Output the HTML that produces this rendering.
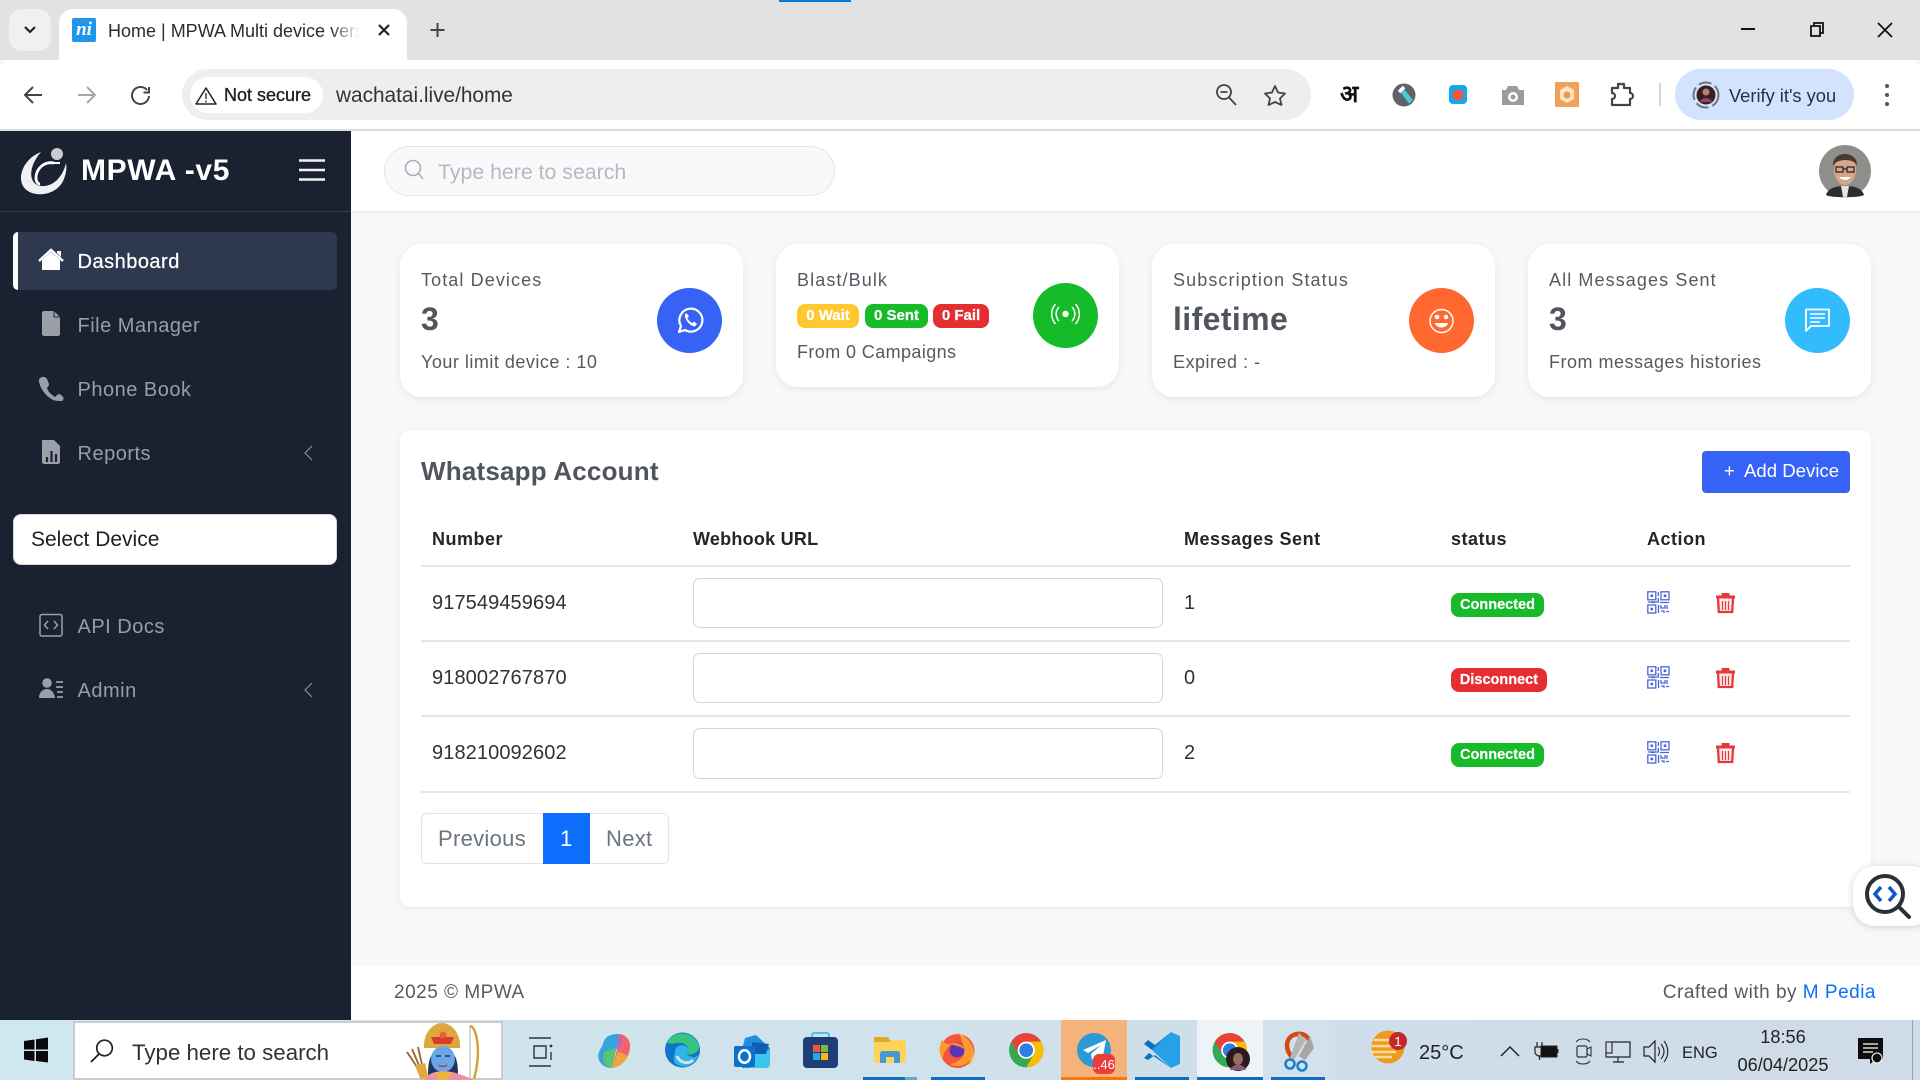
<!DOCTYPE html>
<html lang="en">
<head>
<meta charset="utf-8">
<title>Home | MPWA Multi device version</title>
<style>
html,body{margin:0;padding:0;width:1920px;height:1080px;overflow:hidden;background:#f6f8fa;font-family:"Liberation Sans","Noto Sans CJK SC",sans-serif}
.b{position:absolute;box-sizing:border-box}
.t{position:absolute;white-space:nowrap;line-height:30px;height:30px;margin-top:1px}
svg{position:absolute;left:0;top:0;overflow:visible}
.nav{font-size:20px;letter-spacing:.5px;color:#989da6}
.lab{font-size:18px;letter-spacing:1.1px;color:#555a62;margin-top:.5px}
.val{font-size:32px;color:#50555d;font-weight:bold;letter-spacing:.4px;margin-top:0}
.sub{font-size:18px;letter-spacing:.5px;color:#555a62;margin-top:0}
.card{background:#fff;border-radius:22px;box-shadow:0 2px 7px rgba(60,70,90,.09)}
.th{font-size:18px;font-weight:bold;color:#22252a;letter-spacing:.5px;margin-top:-1px}
.td{font-size:20px;color:#2f3236;letter-spacing:.1px}
.inp{background:#fff;border:1.5px solid #d2d4d6;border-radius:7px;left:693px;width:470px}
.pill{border-radius:8px;color:#fff;font-weight:bold;text-align:center;padding-top:1px;-webkit-text-stroke:.2px #fff}
.line{background:#e3e5e8;left:421px;width:1429px;height:2px}
</style>
</head>
<body>
<!-- browser chrome -->
<div class="b" style="left:0;top:0;width:1920px;height:60px;background:#e2e2e2"></div>
<div class="b" style="left:779px;top:0;width:72px;height:2px;background:#0a78d2"></div>
<div class="b" style="left:9px;top:9px;width:42px;height:42px;border-radius:13px;background:#f0f0f0"></div>
<div class="b" style="left:59px;top:9px;width:348px;height:52px;background:#fff;border-radius:14px 14px 0 0"></div>
<div class="b" style="left:72px;top:18px;width:24px;height:24px;background:#2196e8;border-radius:2px;color:#fff;font:italic bold 19px/24px 'Liberation Serif',serif;text-align:center;overflow:hidden">ni</div>
<div class="t" style="left:108px;top:15px;width:252px;overflow:hidden;font-size:18px;color:#2c2c2c;-webkit-mask-image:linear-gradient(90deg,#000 88%,transparent 100%);mask-image:linear-gradient(90deg,#000 88%,transparent 100%)">Home | MPWA Multi device version</div>
<div class="b" style="left:0;top:60px;width:1920px;height:69px;background:#fff;border-radius:10px 10px 0 0"></div>
<div class="b" style="left:0;top:129px;width:1920px;height:2px;background:#dedede"></div>
<div class="b" style="left:182px;top:69px;width:1129px;height:51px;border-radius:26px;background:#efedee"></div>
<div class="b" style="left:190px;top:77px;width:133px;height:36px;border-radius:18px;background:#fff"></div>
<div class="t" style="left:224px;top:79px;font-size:18px;font-weight:500;color:#222;-webkit-text-stroke:.35px #222">Not secure</div>
<div class="t" style="left:336px;top:79.500px;font-size:20.8px;color:#333">wachatai.live/home</div>
<div class="b" style="left:1675px;top:69px;width:179px;height:51px;border-radius:26px;background:#d3e3fd"></div>
<div class="t" style="left:1729px;top:80px;font-size:18.3px;color:#1f2f4d">Verify it's you</div>
<div class="t" style="left:1340px;top:79px;font-size:24px;font-weight:bold;color:#111;font-family:'Liberation Sans','DejaVu Sans',sans-serif">अ</div>

<!-- sidebar -->
<div class="b" style="left:0;top:131px;width:351px;height:889px;background:#1a2232"></div>
<div class="b" style="left:0;top:211px;width:351px;height:1px;background:#333c4d"></div>
<div class="t" style="left:81px;top:155px;font-size:30px;font-weight:bold;color:#fff;letter-spacing:.65px">MPWA -v5</div>
<div class="b" style="left:13px;top:232px;width:324px;height:58px;background:#2e394f;border-radius:5px;border-left:5px solid #fff"></div>
<div class="t nav" style="left:77.500px;top:246px;color:#fff;font-weight:500;-webkit-text-stroke:.25px #fff">Dashboard</div>
<div class="t nav" style="left:77.500px;top:310px">File Manager</div>
<div class="t nav" style="left:77.500px;top:374px">Phone Book</div>
<div class="t nav" style="left:77.500px;top:438px">Reports</div>
<div class="b" style="left:13px;top:514px;width:324px;height:51px;background:#fff;border-radius:8px;border:1px solid #d5d7da"></div>
<div class="t" style="left:31px;top:524px;font-size:21px;color:#1d1f22">Select Device</div>
<div class="t nav" style="left:77.500px;top:611px">API Docs</div>
<div class="t nav" style="left:77.500px;top:675px">Admin</div>

<!-- header -->
<div class="b" style="left:351px;top:131px;width:1569px;height:80px;background:#fff;box-shadow:0 2px 5px rgba(60,70,90,.08)"></div>
<div class="b" style="left:383.500px;top:146px;width:451px;height:50px;border-radius:25px;background:#f8f9fa;border:1.5px solid #e4e5e7"></div>
<div class="t" style="left:438px;top:156px;font-size:21.3px;color:#b6b9be">Type here to search</div>

<!-- stat cards -->
<div class="b card" style="left:400px;top:244px;width:343px;height:153px"></div>
<div class="b card" style="left:776px;top:244px;width:343px;height:143px"></div>
<div class="b card" style="left:1152px;top:244px;width:343px;height:153px"></div>
<div class="b card" style="left:1528px;top:244px;width:343px;height:153px"></div>

<div class="t lab" style="left:421px;top:264px">Total Devices</div>
<div class="t val" style="left:421px;top:304px">3</div>
<div class="t sub" style="left:421px;top:347px">Your limit device : 10</div>

<div class="t lab" style="left:797px;top:264px">Blast/Bulk</div>
<div class="b pill" style="left:797px;top:304px;width:62px;height:24px;background:#ffc82f;font-size:15px;line-height:22px">0 Wait</div>
<div class="b pill" style="left:865px;top:304px;width:63px;height:24px;background:#16bb2a;font-size:15px;line-height:22px">0 Sent</div>
<div class="b pill" style="left:933px;top:304px;width:56px;height:24px;background:#e52e31;font-size:15px;line-height:22px">0 Fail</div>
<div class="t sub" style="left:797px;top:337px;letter-spacing:.4px">From 0 Campaigns</div>

<div class="t lab" style="left:1173px;top:264px">Subscription Status</div>
<div class="t val" style="left:1173px;top:304px">lifetime</div>
<div class="t sub" style="left:1173px;top:347px">Expired : -</div>

<div class="t lab" style="left:1549px;top:264px">All Messages Sent</div>
<div class="t val" style="left:1549px;top:304px">3</div>
<div class="t sub" style="left:1549px;top:347px">From messages histories</div>

<!-- main card -->
<div class="b" style="left:400px;top:430px;width:1471px;height:477px;background:#fff;border-radius:10px;box-shadow:0 2px 7px rgba(60,70,90,.07)"></div>
<div class="t" style="left:421px;top:456px;margin-top:0;font-size:26px;font-weight:bold;color:#50555c;letter-spacing:.2px">Whatsapp Account</div>
<div class="b" style="left:1702px;top:451px;width:148px;height:42px;background:#3662f5;border-radius:4px"></div>
<div class="t" style="left:1724px;top:456px;margin-top:0;font-size:18.5px;color:#fff">+</div>
<div class="t" style="left:1744px;top:456px;margin-top:0;font-size:18.6px;color:#fff">Add Device</div>

<div class="t th" style="left:432px;top:525px">Number</div>
<div class="t th" style="left:693px;top:525px;letter-spacing:.25px">Webhook URL</div>
<div class="t th" style="left:1184px;top:525px">Messages Sent</div>
<div class="t th" style="left:1451px;top:525px">status</div>
<div class="t th" style="left:1647px;top:525px">Action</div>

<div class="b line" style="top:564.500px"></div>
<div class="b line" style="top:640px"></div>
<div class="b line" style="top:715px"></div>
<div class="b line" style="top:790.500px"></div>

<div class="t td" style="left:432px;top:587px">917549459694</div>
<div class="t td" style="left:432px;top:662px">918002767870</div>
<div class="t td" style="left:432px;top:737px">918210092602</div>
<div class="b inp" style="top:578px;height:50px"></div>
<div class="b inp" style="top:653px;height:50px"></div>
<div class="b inp" style="top:728px;height:51px"></div>
<div class="t td" style="left:1184px;top:587px">1</div>
<div class="t td" style="left:1184px;top:662px">0</div>
<div class="t td" style="left:1184px;top:737px">2</div>
<div class="b pill" style="left:1451px;top:593px;width:93px;height:24px;background:#16bb2a;font-size:14.5px;line-height:22px">Connected</div>
<div class="b pill" style="left:1451px;top:668px;width:96px;height:24px;background:#e52e31;font-size:14.5px;line-height:22px">Disconnect</div>
<div class="b pill" style="left:1451px;top:743px;width:93px;height:24px;background:#16bb2a;font-size:14.5px;line-height:22px">Connected</div>

<!-- pagination -->
<div class="b" style="left:421px;top:813px;width:248px;height:51px;border:1px solid #e2e4e7;border-radius:6px;background:#fff"></div>
<div class="b" style="left:543px;top:813px;width:47px;height:51px;background:#0d6efd"></div>
<div class="t" style="left:438px;top:823px;font-size:22px;color:#6c757d;letter-spacing:.3px">Previous</div>
<div class="t" style="left:560px;top:823px;font-size:22px;color:#fff">1</div>
<div class="t" style="left:606px;top:823px;font-size:22px;color:#6c757d;letter-spacing:.3px">Next</div>

<!-- footer -->
<div class="b" style="left:351px;top:966px;width:1569px;height:54px;background:#fff"></div>
<div class="t" style="left:394px;top:977px;font-size:19px;letter-spacing:.5px;color:#555a62">2025 © MPWA</div>
<div class="t" style="right:44px;top:977px;font-size:19px;letter-spacing:.5px;color:#555a62">Crafted with by <span style="color:#0d6efd">M Pedia</span></div>

<!-- floating widget -->
<div class="b" style="left:1853px;top:866px;width:80px;height:60px;background:#fff;border-radius:22px;box-shadow:0 1px 8px rgba(0,0,0,.16)"></div>

<!-- taskbar -->
<div class="b" style="left:0;top:1020px;width:1920px;height:60px;background:linear-gradient(90deg,#cfe7ef 0%,#d0e3ec 40%,#cfdeea 70%,#cfdbe8 100%)"></div>
<div class="b" style="left:73px;top:1021px;width:430px;height:59px;background:#fff;border:2px solid #c9cccd"></div>
<div class="t" style="left:132px;top:1037px;font-size:22.3px;color:#333">Type here to search</div>
<div class="b" style="left:1061px;top:1020px;width:66px;height:60px;background:#f6b27b;border-bottom:3px solid #f7770c"></div>
<div class="b" style="left:1127px;top:1020px;width:66px;height:60px;background:#cfdfea"></div>
<div class="b" style="left:1197px;top:1020px;width:66px;height:60px;background:#eef3f8"></div>
<div class="b" style="left:1263px;top:1020px;width:66px;height:60px;background:#d3e1ec"></div>
<div class="b" style="left:863px;top:1077px;width:42px;height:3px;background:#0a6fc4"></div>
<div class="b" style="left:905px;top:1077px;width:12px;height:3px;background:#6aa5d8"></div>
<div class="b" style="left:931px;top:1077px;width:54px;height:3px;background:#0a6fc4"></div>
<div class="b" style="left:1135px;top:1077px;width:54px;height:3px;background:#0a6fc4"></div>
<div class="b" style="left:1197px;top:1077px;width:66px;height:3px;background:#0a6fc4"></div>
<div class="b" style="left:1271px;top:1077px;width:54px;height:3px;background:#0a6fc4"></div>
<div class="t" style="left:1419px;top:1037px;font-size:20px;color:#222">25°C</div>
<div class="t" style="left:1682px;top:1037px;font-size:16.5px;color:#222">ENG</div>
<div class="t" style="left:1737px;top:1021px;width:92px;text-align:center;font-size:18.2px;color:#222">18:56</div>
<div class="t" style="left:1737px;top:1049px;width:92px;text-align:center;font-size:18.2px;color:#222">06/04/2025</div>
<div class="b" style="left:1912px;top:1020px;width:1px;height:60px;background:#9aa3ab"></div>

<!-- icons -->
<svg width="1920" height="1080" viewBox="0 0 1920 1080" fill="none">
<defs>
<g id="chrome"><circle cx="24" cy="24" r="22" fill="#34a853"/><path d="M5 13A22 22 0 0 1 43 13H24L14.5 29.5Z" fill="#ea4335"/><path d="M24 13H43A22 22 0 0 1 24 46L33.5 29.5Z" fill="#fbbc04"/><circle cx="24" cy="24" r="11" fill="#fff"/><circle cx="24" cy="24" r="8.8" fill="#2f7ee6"/></g>
<g id="qr" stroke="#4a66d6" stroke-width="1.3"><rect x=".8" y=".8" width="8" height="8"/><rect x="14" y=".8" width="8" height="8"/><rect x=".8" y="14" width="8" height="8"/><rect x="3.5" y="3.5" width="2.6" height="2.6" fill="#4a66d6" stroke="none"/><rect x="16.7" y="3.5" width="2.6" height="2.6" fill="#4a66d6" stroke="none"/><rect x="3.5" y="16.7" width="2.6" height="2.6" fill="#4a66d6" stroke="none"/><path d="M11.3 1V5M11.3 7V11H1M4 11.5H8M13 11.5H22M14 14V17H18V14M20 14V18M11.500 14V22M14 20H17V22M19 20.5H22"/></g>
<g id="trash"><path d="M0 3.5H19V6.500H0Z" fill="#e5383b"/><path d="M5.500 3.500V1H13.500V3.500" fill="#e5383b"/><path d="M2 6.500L2.800 20H16.200L17 6.500" stroke="#e5383b" stroke-width="2.300" fill="#fde8e8"/><path d="M6.500 9V18M9.500 9V18M12.500 9V18" stroke="#e5383b" stroke-width="1.200"/></g>
<path id="chev" d="M8 1L1 8L8 15" stroke="#8b909a" stroke-width="1.2"/>
</defs>

<!-- tab strip -->
<path d="M25 27L30 32L35 27" stroke="#222" stroke-width="2.2"/>
<path d="M379 25L389 35M389 25L379 35" stroke="#222" stroke-width="2.2"/>
<path d="M437.500 23V37M430.500 30H444.500" stroke="#444" stroke-width="2"/>
<path d="M1741 29H1755" stroke="#111" stroke-width="2"/>
<path d="M1811 26H1820V36H1811ZM1814 26V23H1823V33H1820" stroke="#111" stroke-width="1.8"/>
<path d="M1878 23L1892 37M1892 23L1878 37" stroke="#111" stroke-width="1.8"/>

<!-- nav buttons -->
<path d="M42 95H25M33 87L25 95L33 103" stroke="#444" stroke-width="2"/>
<path d="M78 95H95M87 87L95 95L87 103" stroke="#a8a8a8" stroke-width="2"/>
<path d="M147 90A8.500 8.500 0 1 0 149 96M149 87V92.500H143.500" stroke="#444" stroke-width="2"/>
<path d="M206 88L196 104H216Z" stroke="#222" stroke-width="1.500" stroke-linejoin="round"/><path d="M206 93V99M206 100.500V102.500" stroke="#222" stroke-width="1.300"/>
<!-- omnibox right -->
<circle cx="1224" cy="92" r="7" stroke="#444" stroke-width="1.800"/><path d="M1220.500 92H1227.500M1229 97.500L1236 105" stroke="#444" stroke-width="1.800"/>
<path d="M1275 86L1278 92.500L1285 93.500L1280 98.500L1281.500 105L1275 102L1268.500 105L1270 98.500L1265 93.500L1272 92.500Z" stroke="#444" stroke-width="1.800" stroke-linejoin="round"/>
<!-- extensions -->
<circle cx="1404" cy="95" r="11.500" fill="#5f6368"/><path d="M1402 90L1411 102" stroke="#46c8e0" stroke-width="5"/><path d="M1399 92L1404 87" stroke="#fff" stroke-width="3.500"/>
<rect x="1449" y="85" width="18" height="19" rx="4" fill="#12a9ee"/><circle cx="1458" cy="95" r="5.500" fill="#f2543c"/>
<path d="M1502 90H1506L1508 86H1517L1519 90H1524V105H1502Z" fill="#9b9b9b"/><circle cx="1513" cy="97" r="5" fill="#fff"/><circle cx="1513" cy="97" r="2.500" fill="#9b9b9b"/>
<rect x="1555" y="82" width="24" height="25" rx="1" fill="#f1a15a"/><path d="M1567 86L1574 90V99L1567 103L1560 99V90Z" fill="#fbe6c8"/><circle cx="1567" cy="95" r="3.500" fill="#ee9642"/>
<path d="M1612 88H1618V84H1624V88H1630V93A2.500 2.500 0 0 1 1630 99V105H1612V99A3 3 0 0 0 1612 93Z" stroke="#444" stroke-width="2.200" stroke-linejoin="round"/>
<path d="M1660 83V106" stroke="#c7c7c7" stroke-width="1.500"/>
<circle cx="1706" cy="95" r="12.500" stroke="#6a7488" stroke-width="2" stroke-dasharray="13 4"/><circle cx="1706" cy="95" r="9.500" fill="#3a1f22"/><circle cx="1706" cy="92" r="3.500" fill="#b27f70"/><path d="M1700 102C1701 97 1711 97 1712 102Z" fill="#8c4a60"/>
<g fill="#555"><circle cx="1887" cy="86" r="2"/><circle cx="1887" cy="95" r="2"/><circle cx="1887" cy="104" r="2"/></g>

<!-- logo -->
<path d="M41 152C25 158 17 175 23 186C30 198 53 197 62 183C66 176 67 169 66 163C63 176 54 187 41 186C29 185 27 168 41 152Z" fill="#eef0f2"/>
<path d="M54 163C44 161 36 169 36 178C36 182 38 184 40 184" stroke="#fff" stroke-width="2.800"/><path d="M50 163L60 163" stroke="#fff" stroke-width="2"/>
<circle cx="57" cy="154" r="6" fill="#c9ccd0"/>
<path d="M299 160.500H325M299 170H325M299 179.500H325" stroke="#f2f2f2" stroke-width="2.600"/>

<!-- sidebar icons -->
<path d="M39 261L51 250L63 261" stroke="#fff" stroke-width="2.500"/><path d="M42 260L51 252L60 260V270H42Z" fill="#fff"/><path d="M57 251H61V257L57 253Z" fill="#fff"/>
<path d="M42 313C42 312 43 311 44 311H54L60 317V334C60 335 59 336 58 336H44C43 336 42 335 42 334Z" fill="#9a9fa8"/><path d="M54 311V317H60" stroke="#1a2232" stroke-width="1"/>
<path d="M40 378C43 376 46 377 47 379L49 384C49 386 48 387 47 388C48 392 52 395 55 397C57 395 58 394 60 394L62 396C64 397 64 400 62 401C59 401 56 401 53 400C46 396 41 390 39 382C39 380 39 379 40 378Z" fill="#9a9fa8"/>
<path d="M42 441C42 440 43 440 44 440H54L60 446V462C60 463 59 464 58 464H44C43 464 42 463 42 462Z" fill="#9a9fa8"/><path d="M47 462V457M51.500 462V451M56 462V454" stroke="#1a2232" stroke-width="2.200"/>
<rect x="40" y="614.500" width="22" height="21.500" rx="2" stroke="#9a9fa8" stroke-width="1.500"/><path d="M48 621L44.500 625L48 629M54 621L57.500 625L54 629" stroke="#9a9fa8" stroke-width="1.500"/>
<circle cx="47" cy="683" r="4.800" fill="#9a9fa8"/><path d="M39 698C39 692 43 689 47 689C51 689 54 692 55 698Z" fill="#9a9fa8"/><path d="M56 682H63M56 687H63M57 692H63M57 697H63" stroke="#9a9fa8" stroke-width="1.700"/>
<use href="#chev" x="304" y="445"/><use href="#chev" x="304" y="682"/>

<!-- header search + avatar -->
<circle cx="413" cy="168" r="7.500" stroke="#a9adb3" stroke-width="1.500"/><path d="M418.500 173.500L423 179" stroke="#a9adb3" stroke-width="1.500"/>
<ellipse cx="1845" cy="171" rx="26" ry="26" fill="#8f8e8a"/>
<path d="M1826 195C1828 188 1836 186 1845 186C1854 186 1862 188 1864 195C1860 198 1830 198 1826 195Z" fill="#2e2d2c"/><path d="M1841 186H1849L1847 197H1843Z" fill="#e6e3de"/>
<ellipse cx="1845" cy="170" rx="11" ry="15" fill="#d5a68b"/><path d="M1833 166C1832 150 1858 150 1857 166C1855 158 1836 158 1833 166Z" fill="#4a3a2e"/>
<path d="M1836 167H1843V172H1836ZM1847 167H1854V172H1847ZM1843 169H1847" stroke="#222" stroke-width="1.200"/><path d="M1839 177C1842 181 1848 181 1851 177Z" fill="#fff"/>

<!-- card icons -->
<circle cx="689.500" cy="320.500" r="32.500" fill="#3662f5"/>
<path d="M679 332L681 326A11.500 11.500 0 1 1 685 330Z" stroke="#fff" stroke-width="2.200" stroke-linejoin="round"/><path d="M685 314C684 318 689 326 695 326.500L697 324L694 321.500L692.500 323C690 322 688 320 687.500 318L689 316.500L687 313.500Z" fill="#fff"/>
<circle cx="1065.500" cy="315.500" r="32.500" fill="#16bb2a"/>
<circle cx="1065.500" cy="314" r="3.200" fill="#fff"/><path d="M1059 307A10 10 0 0 0 1059 321M1072 307A10 10 0 0 1 1072 321M1055.500 304A15 15 0 0 0 1055.500 324M1075.500 304A15 15 0 0 1 1075.500 324" stroke="#fff" stroke-width="1.500"/>
<circle cx="1441.500" cy="320.500" r="32.500" fill="#ff682f"/>
<circle cx="1441.500" cy="321" r="11.500" stroke="#fff" stroke-width="1.500"/><circle cx="1437" cy="317" r="2.300" fill="#fff"/><circle cx="1446" cy="317" r="2.300" fill="#fff"/><path d="M1435 323H1448C1447 329 1436 329 1435 323Z" fill="#fff"/>
<circle cx="1817.500" cy="320.500" r="32.500" fill="#33bcfd"/>
<path d="M1806 309.500H1829V326H1811L1806 331Z" stroke="#fff" stroke-width="1.800" stroke-linejoin="round"/><path d="M1810 314H1825M1810 318H1825M1810 322H1820" stroke="#fff" stroke-width="1.500"/>

<!-- action icons -->
<use href="#qr" x="1647" y="591"/><use href="#qr" x="1647" y="666"/><use href="#qr" x="1647" y="741"/>
<use href="#trash" x="1716" y="592"/><use href="#trash" x="1716" y="667"/><use href="#trash" x="1716" y="742"/>

<!-- floating widget -->
<circle cx="1885" cy="894" r="18" stroke="#2b2f36" stroke-width="4"/><path d="M1899 907L1909 917" stroke="#2b2f36" stroke-width="4" stroke-linecap="round"/>
<path d="M1881 887L1875 894L1881 901M1889 887L1895 894L1889 901" stroke="#1257c7" stroke-width="3.500"/>

<!-- taskbar: windows -->
<path d="M24 1041L34.500 1039.500V1049.500H24ZM36 1039.200L48 1037.500V1049.500H36ZM24 1051H34.500V1061L24 1059.500ZM36 1051H48V1062.500L36 1061Z" fill="#0a0a0a"/>
<circle cx="104.500" cy="1048" r="7.800" stroke="#222" stroke-width="1.700"/><path d="M99 1054L91 1062" stroke="#222" stroke-width="1.900"/>
<!-- rama figure -->
<path d="M470 1026C476 1026 482 1050 474 1079" stroke="#d9a03a" stroke-width="2.500"/>
<path d="M470 1026V1078" stroke="#999" stroke-width=".8"/>
<path d="M424 1048C423 1034 432 1023 442 1023C452 1023 461 1034 460 1048Z" fill="#dca73b"/><path d="M431 1037H454L451 1044H434Z" fill="#d93c2b"/><circle cx="443" cy="1035" r="3.500" fill="#e8603a"/>
<path d="M428 1076C428 1060 430 1050 443 1050C456 1050 458 1060 458 1076Z" fill="#20355e"/>
<ellipse cx="443" cy="1059" rx="12" ry="13" fill="#6ba7e8"/><path d="M439 1065C441 1067 445 1067 447 1065" stroke="#b33a3a" stroke-width="1.400"/><path d="M436 1056H441M445 1056H450" stroke="#223" stroke-width="1.300"/>
<path d="M424 1080C426 1074 436 1071 443 1071C451 1071 461 1074 474 1080Z" fill="#ec93a0"/><path d="M435 1072H452L447 1080H439Z" fill="#e9b73f"/>
<path d="M407 1052L419 1070M412 1049L421 1070M418 1047L423 1069" stroke="#8f6a2e" stroke-width="1.800"/><path d="M415 1066L425 1063L428 1076L421 1080Z" fill="#e2a93a"/>
<!-- task view -->
<path d="M529 1038H551M534 1046H546V1058H534ZM529 1066H551" stroke="#333" stroke-width="1.400" fill="none"/><circle cx="551" cy="1046" r="1.400" fill="#333"/><path d="M551 1052V1060" stroke="#333" stroke-width="1.400"/>
<!-- copilot -->
<path d="M603 1044C605 1035 612 1034 620 1034L616 1050L612 1068C604 1068 596 1062 599 1052Z" fill="#35a3dc"/><path d="M618 1034C626 1034 631 1040 630 1048C629 1058 622 1066 612 1068L617 1050Z" fill="#f1636f"/><path d="M604 1052L616 1048L612 1068C605 1067 601 1060 604 1052Z" fill="#5cc36e"/><path d="M620 1034C623 1040 622 1045 616 1050L619 1040Z" fill="#9a6be0"/><path d="M612 1067L618 1052C623 1052 626 1056 628 1056C625 1062 620 1067 612 1068Z" fill="#f3a33c"/>
<!-- edge -->
<circle cx="682.500" cy="1050" r="17.500" fill="#1174c8"/><path d="M667 1042C674 1030 694 1030 699 1046C700 1052 692 1056 686 1054C690 1050 688 1044 682 1043C675 1042 670 1046 667 1042Z" fill="#37c47e"/><path d="M675 1052C675 1046 682 1043 687 1047C690 1050 688 1053 686 1054C692 1058 696 1058 699 1054C696 1064 684 1071 675 1063C673 1060 674 1055 675 1052Z" fill="#2fb3e8"/><path d="M677 1056C680 1064 690 1064 693 1060" stroke="#d0e3ec" stroke-width="3"/>
<!-- outlook -->
<path d="M745 1038L756 1035L770 1048L765 1068H742V1050Z" fill="#1f8fe0"/><path d="M750 1050H770V1064C770 1067 768 1068 766 1068H750Z" fill="#3cc4f0"/><path d="M752 1042L769 1044L766 1054L752 1054Z" fill="#0f5eb5"/>
<rect x="734" y="1046" width="21" height="21" rx="2" fill="#0c71cc"/><ellipse cx="744.500" cy="1056.500" rx="5.500" ry="6.200" stroke="#fff" stroke-width="2.500"/>
<!-- store -->
<path d="M812 1040V1035C812 1034 813 1033 814 1033H827C828 1033 829 1034 829 1035V1040" stroke="#39c1e0" stroke-width="1.800"/><rect x="803" y="1037" width="35" height="31" rx="4" fill="#1d3f75"/><rect x="813" y="1045" width="7" height="7" fill="#f2543c"/><rect x="821" y="1045" width="7" height="7" fill="#7db93a"/><rect x="813" y="1053" width="7" height="7" fill="#22a8ee"/><rect x="821" y="1053" width="7" height="7" fill="#fcb712"/>
<!-- explorer -->
<path d="M874 1040C874 1038 875 1037 877 1037H886L889 1040H904C905 1040 906 1041 906 1043V1061C906 1062 905 1063 904 1063H876C875 1063 874 1062 874 1061Z" fill="#fdd35a"/><path d="M874 1037H888L891 1042H874Z" fill="#e3a827"/><path d="M880 1063V1054C880 1052 881 1051 883 1051H897C899 1051 900 1052 900 1054V1063H894V1057H886V1063Z" fill="#4b97cf"/>
<!-- firefox -->
<circle cx="957.500" cy="1051" r="17" fill="#f4553c"/><path d="M958 1033C975 1040 978 1058 968 1066C976 1050 966 1040 958 1033Z" fill="#ffb52e"/><path d="M942 1040C946 1044 947 1045 952 1044C946 1048 941 1056 944 1062C938 1054 939 1046 942 1040Z" fill="#ff9a2e"/><path d="M960 1035C972 1040 976 1052 970 1060C966 1066 956 1068 950 1064C960 1062 966 1056 964 1048Z" fill="#ff9a2e"/><circle cx="957" cy="1050" r="7.500" fill="#5b34b8"/><path d="M950 1044C956 1041 964 1044 965 1050C961 1046 955 1046 950 1044Z" fill="#ff8a2e"/>
<!-- chrome -->
<use href="#chrome" transform="translate(1007.500,1031.500) scale(.78)"/>
<!-- telegram -->
<circle cx="1094" cy="1050" r="17" fill="#2b9ad6"/><path d="M1083 1050L1106 1040L1102 1061L1095 1056L1092 1060L1091 1054L1101 1045L1088 1053Z" fill="#fff"/>
<rect x="1093" y="1054" width="22" height="20" rx="6" fill="#ec3d3d"/>
<text x="1104" y="1069" font-size="13" fill="#fff" text-anchor="middle" font-family="Liberation Sans,sans-serif">..46</text>
<!-- vscode -->
<path d="M1171 1032L1180 1036V1064L1171 1068L1152 1050Z" fill="#26a0e8"/><path d="M1171 1032L1152 1050L1144 1044L1148 1040L1155 1045ZM1171 1068L1149 1053L1144 1058L1148 1060L1155 1055Z" fill="#0a72bf"/>
<!-- chrome active -->
<use href="#chrome" transform="translate(1211,1031.500) scale(.78)"/>
<circle cx="1238" cy="1059" r="12" fill="#2b1a1f"/><ellipse cx="1238" cy="1059" rx="5" ry="6" fill="#9a6d60"/><path d="M1230 1070C1232 1063 1244 1063 1246 1070Z" fill="#8c5a7a"/>
<!-- snip -->
<path d="M1293 1058C1284 1050 1285 1036 1297 1034C1303 1033 1307 1036 1309 1040" stroke="#d24a17" stroke-width="4.500"/><path d="M1299 1033L1306 1040L1294 1060L1290 1058Z" fill="#b5b5b5"/><path d="M1310 1036L1314 1048L1305 1060L1299 1056Z" fill="#a5a5a5"/>
<circle cx="1290" cy="1064" r="4.500" stroke="#1580d0" stroke-width="2.500"/><circle cx="1302" cy="1066" r="4.500" stroke="#1580d0" stroke-width="2.500"/>
<!-- weather -->
<circle cx="1388" cy="1047" r="16.500" fill="#f0991f"/><path d="M1374 1040H1396M1372 1046H1392M1370 1052H1396M1375 1057H1392" stroke="#fbdca0" stroke-width="2.500"/>
<circle cx="1398" cy="1041" r="9" fill="#c4282a"/>
<text x="1398" y="1046" font-size="13" fill="#fff" text-anchor="middle" font-family="Liberation Sans,sans-serif">1</text>
<!-- tray -->
<path d="M1501 1056L1510 1047L1519 1056" stroke="#222" stroke-width="1.500"/>
<path d="M1537 1042V1047M1542 1042V1047M1535 1047H1544V1052C1544 1054 1542 1056 1539.500 1056C1537 1056 1535 1054 1535 1052ZM1539.500 1056V1060" stroke="#222" stroke-width="1.200"/><rect x="1541" y="1046" width="16" height="11" fill="#111" stroke="#222"/><rect x="1557" y="1049" width="1.500" height="4" fill="#222"/>
<rect x="1577" y="1046" width="10" height="11" rx="1.500" stroke="#333" stroke-width="1.200"/><path d="M1587 1049L1591 1047V1056L1587 1054M1576 1042C1579 1038 1587 1038 1590 1042M1576 1061C1579 1065 1587 1065 1590 1061" stroke="#333" stroke-width="1.100"/>
<rect x="1606" y="1042" width="6" height="11" stroke="#222" stroke-width="1.100" fill="#d0dde8"/><path d="M1612 1042H1630V1057H1606V1053M1618 1057V1062M1613 1062H1624" stroke="#222" stroke-width="1.200"/>
<path d="M1644 1047H1649L1655 1041V1062L1649 1056H1644Z" stroke="#222" stroke-width="1.200"/><path d="M1658 1047C1660 1050 1660 1053 1658 1056M1661 1044C1665 1049 1665 1054 1661 1059M1664 1041C1669 1047 1669 1056 1664 1062" stroke="#222" stroke-width="1.100"/>
<!-- notification -->
<path d="M1858 1038H1883V1059H1876L1870 1064V1059H1858Z" fill="#0e0e0e"/><path d="M1863 1044H1878M1863 1048H1878M1863 1052H1873" stroke="#fff" stroke-width="1.300"/><circle cx="1877" cy="1058" r="5" fill="#0e0e0e" stroke="#fff" stroke-width="1.100"/>
</svg>
</body>
</html>
